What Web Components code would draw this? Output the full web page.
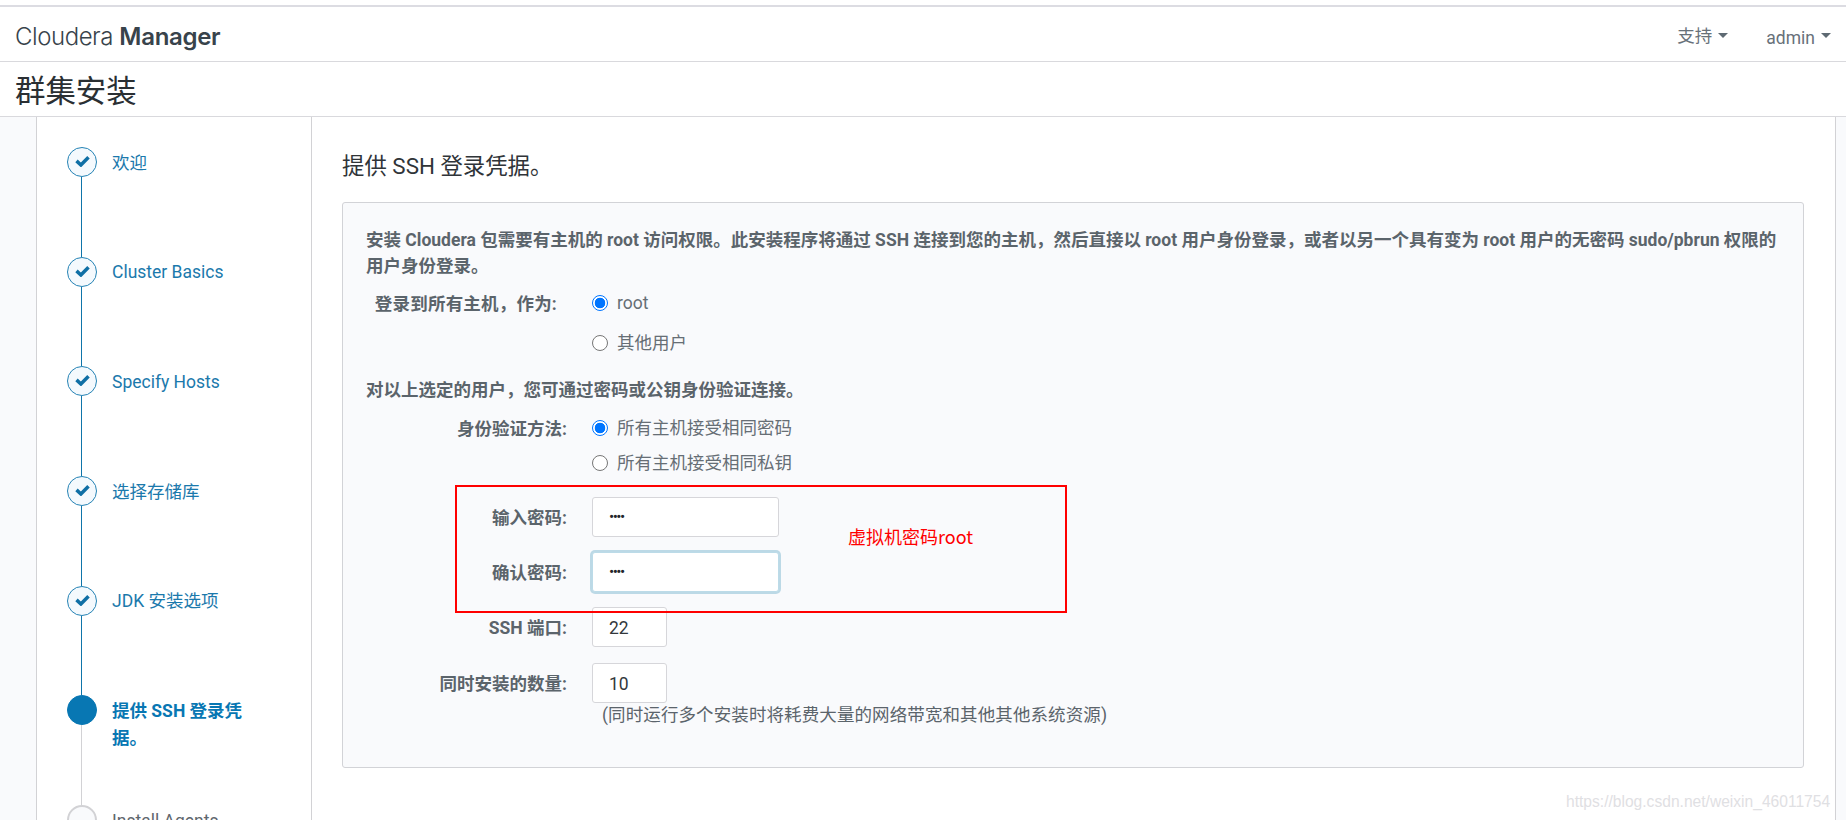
<!DOCTYPE html>
<html lang="zh">
<head>
<meta charset="utf-8">
<title>Cloudera Manager</title>
<style>
html,body{margin:0;padding:0;background:#fff;}
body{font-family:Roboto,"Noto Sans CJK SC",sans-serif;font-size:17.5px;color:#5b646b;overflow:hidden;}
</style>
</head>
<body>
<cm-app>
  <cm-nav slot="nav">
    <cm-menu>支持</cm-menu>
    <cm-menu latin>admin</cm-menu>
  </cm-nav>
  <cm-title slot="title">群集安装</cm-title>
  <cm-steps slot="steps">
    <cm-step state="done">欢迎</cm-step>
    <cm-step state="done">Cluster Basics</cm-step>
    <cm-step state="done">Specify Hosts</cm-step>
    <cm-step state="done">选择存储库</cm-step>
    <cm-step state="done">JDK 安装选项</cm-step>
    <cm-step state="active">提供 SSH 登录凭据。</cm-step>
    <cm-step state="todo">Install Agents</cm-step>
  </cm-steps>
  <cm-panel heading="提供 SSH 登录凭据。" slot="main">
    <cm-para>安装 Cloudera 包需要有主机的 root 访问权限。此安装程序将通过 SSH 连接到您的主机，然后直接以 root 用户身份登录，或者以另一个具有变为 root 用户的无密码 sudo/pbrun 权限的用户身份登录。</cm-para>
    <cm-field label="登录到所有主机，作为:" inset="10" style="margin-top:11px">
      <cm-radio checked>root</cm-radio>
    </cm-field>
    <cm-field style="margin-top:14px"><cm-radio>其他用户</cm-radio></cm-field>
    <cm-para style="margin-top:21px">对以上选定的用户，您可通过密码或公钥身份验证连接。</cm-para>
    <cm-field label="身份验证方法:" style="margin-top:12px"><cm-radio checked>所有主机接受相同密码</cm-radio></cm-field>
    <cm-field style="margin-top:9px"><cm-radio>所有主机接受相同私钥</cm-radio></cm-field>
    <cm-field label="输入密码:" style="margin-top:21px"><cm-input type="password" value="root" width="187"></cm-input></cm-field>
    <cm-field label="确认密码:" style="margin-top:15px"><cm-input type="password" value="root" width="187" focused></cm-input></cm-field>
    <cm-field label="SSH 端口:" style="margin-top:15px"><cm-input value="22" width="75"></cm-input></cm-field>
    <cm-field label="同时安装的数量:" style="margin-top:16px"><cm-input value="10" width="75"></cm-input></cm-field>
    <cm-field style="margin-top:-1px"><cm-note>(同时运行多个安装时将耗费大量的网络带宽和其他其他系统资源)</cm-note></cm-field>
  </cm-panel>
  <cm-annotation slot="overlay">虚拟机密码root</cm-annotation>
  <cm-watermark slot="overlay">https://blog.csdn.net/weixin_46011754</cm-watermark>
</cm-app>
<script>
function def(name, css, html, extra){
  customElements.define(name, class extends HTMLElement{
    constructor(){
      super();
      const r=this.attachShadow({mode:'open'});
      r.innerHTML='<style>'+css+'</style>'+(typeof html==='function'?html(this):html);
    }
    connectedCallback(){ if(extra) extra(this); }
  });
}
def('cm-app',`
  :host{display:block;position:relative;width:1846px;height:820px;overflow:hidden;background:#fff;}
  .top{height:5px;}
  .nav{border-top:2px solid #dcdce2;border-bottom:1px solid #d9d9dd;}
  .title{border-bottom:1px solid #d9d9dd;}
  .body{display:flex;height:703px;background:#f9fafc;}
  .side{flex:none;width:274px;margin-left:36px;background:#fff;border-left:1px solid #d2d2d5;border-right:1px solid #d2d2d5;overflow:hidden;}
  .main{flex:none;width:1523px;background:#fff;border-right:1px solid #d2d2d5;overflow:hidden;}
  .band{flex:1;}
`,`<div class="top"></div>
  <div class="nav"><slot name="nav"></slot></div>
  <div class="title"><slot name="title"></slot></div>
  <div class="body"><div class="side"><slot name="steps"></slot></div><div class="main"><slot name="main"></slot></div><div class="band"></div></div>
  <slot name="overlay"></slot>`);
def('cm-nav',`
  :host{display:flex;align-items:center;height:54px;padding:0 15px 0 15px;}
  .logo{font-family:Inter,Roboto,sans-serif;font-size:24px;line-height:30px;padding-top:6px;color:#38434b;font-weight:300;letter-spacing:-.45px;}
  .logo b{font-weight:600;letter-spacing:-.3px;}
  .sp{flex:1;}
  .menus{display:flex;gap:38px;align-items:center;height:54px;}
`,`<span class="logo">Cloudera <b>Manager</b></span><span class="sp"></span><div class="menus"><slot></slot></div>`);
def('cm-menu',`
  :host{display:flex;align-items:center;gap:6px;height:26px;margin-top:2px;font-size:17.5px;line-height:26px;color:#68717a;font-family:Roboto,"Noto Sans CJK SC",sans-serif;}
  span{display:block;padding-top:1px;height:25px;}
  :host([latin]) span{padding-top:3px;height:23px;}
  i{display:block;width:0;height:0;border:5px solid transparent;border-top:5.5px solid #5e6a73;border-bottom:0;margin-top:1px;}
`,`<span><slot></slot></span><i></i>`);
def('cm-title',`
  :host{display:flex;align-items:center;box-sizing:border-box;height:54px;padding:0 15px;font-size:30.4px;color:#2a2f33;font-family:"Noto Sans CJK SC",sans-serif;font-weight:400;}
`,`<slot></slot>`);
def('cm-steps',`:host{display:block;padding:30px 0 0 30px;}`,`<slot></slot>`);
def('cm-step',`
  :host{display:flex;gap:15px;height:109.7px;font-size:17.5px;line-height:27px;color:#1b79ac;font-family:Roboto,"Noto Sans CJK SC",sans-serif;}
  .rail{flex:none;width:30px;display:flex;flex-direction:column;align-items:center;}
  .dot{flex:none;box-sizing:border-box;width:30px;height:30px;border-radius:50%;border:1.5px solid #2583b5;background:#f4f9fd;display:flex;align-items:center;justify-content:center;}
  .dot svg{display:block;margin-top:-2px;}
  .line{flex:1;width:1.5px;background:#0f75aa;margin-left:-1px;}
  .text{max-width:150px;padding-top:2.5px;}
  :host([state=active]){font-weight:700;color:#0877b3;}
  :host([state=active]) .dot{background:#0877b3;border-color:#0877b3;}
  :host([state=active]) .line{background:#d2d2d5;}
  :host([state=todo]){color:#5f676e;}
  :host([state=todo]) .dot{background:#f9fafc;border:2px solid #d2d2d5;}
`,el=>{
  const s=el.getAttribute('state');
  const chk=s==='done'?'<svg width="15" height="12" viewBox="0 0 15 12"><path d="M1.5 5.9 5.9 10 13.5 2.2" fill="none" stroke="#0f6fa5" stroke-width="3.5"/></svg>':'';
  return `<div class="rail"><div class="dot">${chk}</div><div class="line"></div></div><div class="text"><slot></slot></div>`;
});
def('cm-panel',`
  :host{display:block;padding:34px 30px 0 30px;}
  h2{margin:0;font-size:22.4px;line-height:30px;font-weight:400;color:#2f3438;font-family:Roboto,"Noto Sans CJK SC",sans-serif;}
  .box{box-sizing:border-box;margin-top:21px;width:1462px;height:566px;padding:24px 24px 0 23px;background:#f9fafc;border:1px solid #d2d3d7;border-radius:3px;}
`,el=>`<h2>${el.getAttribute('heading')}</h2><div class="box"><slot></slot></div>`);
def('cm-para',`:host{display:block;font-weight:700;font-size:17.5px;line-height:26px;color:#5b646b;}`,`<slot></slot>`);
def('cm-field',`
  :host{display:grid;grid-template-columns:201px auto;column-gap:25px;align-items:center;justify-content:start;}
  .l{box-sizing:border-box;height:26px;font-weight:700;text-align:right;line-height:24px;padding-top:2px;color:#5b646b;}
`,el=>{
  const i=el.getAttribute('inset');
  return `<div class="l"${i?` style="padding-right:${i}px;letter-spacing:.2px"`:''}>${el.getAttribute('label')||''}</div><div><slot></slot></div>`;
});
def('cm-radio',`
  :host{display:flex;align-items:center;gap:9px;line-height:26px;color:#666e75;}
  i{flex:none;box-sizing:border-box;width:16px;height:16px;border-radius:50%;border:1px solid #767676;background:#fff;}
  :host([checked]) i{border:1.5px solid #0075ff;background:radial-gradient(circle,#0075ff 0,#0075ff 5px,#fff 5.6px);}
`,`<i></i><span><slot></slot></span>`);
def('cm-input',`
  :host{display:block;}
  input{display:block;box-sizing:border-box;height:40px;padding:2px 16px 0;border:1px solid #d6d6da;border-radius:3px;background:#fff;color:#33383c;font:17.5px Roboto,sans-serif;outline:0;}
  input[type=password]{font-size:15.5px;letter-spacing:-1.6px;padding-top:0;color:#22262a;}
  :host([focused]) input{border-color:#bcdbe8;box-shadow:0 0 0 2px #bcd9e6;}
`,el=>`<input type="${el.getAttribute('type')||'text'}" value="${el.getAttribute('value')||''}" style="width:${el.getAttribute('width')}px">`);
def('cm-note',`:host{display:block;margin-left:10px;line-height:26px;color:#5b646b;letter-spacing:.1px;}`,`<slot></slot>`);
def('cm-annotation',`
  :host{position:absolute;left:455px;top:484.5px;box-sizing:border-box;width:612px;height:128.5px;border:2px solid #f00;color:#f00;font-family:"Noto Sans CJK SC",sans-serif;font-size:18px;line-height:26px;padding:36px 0 0 391px;}
`,`<slot></slot>`);
def('cm-watermark',`
  :host{position:absolute;left:1566px;top:790px;font-family:"Liberation Sans",sans-serif;font-size:15.6px;line-height:24px;color:#dfe0e3;white-space:nowrap;}
`,`<slot></slot>`);
</script>
</body>
</html>
